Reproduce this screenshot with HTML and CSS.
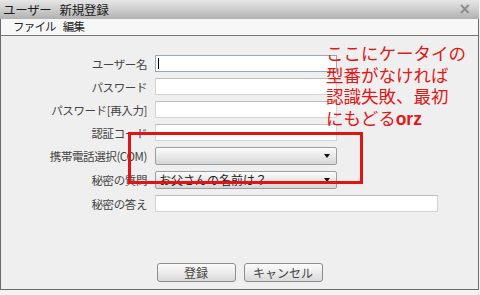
FILE: index.html
```html
<!DOCTYPE html>
<html lang="ja">
<head>
<meta charset="utf-8">
<link rel="stylesheet" href="styles.css">
</head>
<body>
<div class="window">
  <div class="titlebar">
    <span class="title"><span class="t1">ユーザー</span><span>新規登録</span></span>
    <span class="close">×</span>
  </div>
  <div class="menubar">
    <span class="menu-item">ファイル</span>
    <span class="menu-item">編集</span>
  </div>
  <div class="content">
    <div class="form">
      <label class="lbl">ユーザー名</label>
      <div class="input focused"><span class="caret"></span></div>
      <label class="lbl">パスワード</label>
      <div class="input"></div>
      <label class="lbl">パスワード[再入力]</label>
      <div class="input"></div>
      <label class="lbl">認証コード</label>
      <div class="input"></div>
      <label class="lbl">携帯電話選択(COM)</label>
      <div class="select"><span class="sel-text"></span><span class="arrow"></span></div>
      <label class="lbl">秘密の質問</label>
      <div class="select"><span class="sel-text">お父さんの名前は？</span><span class="arrow"></span></div>
      <label class="lbl">秘密の答え</label>
      <div class="input wide"></div>
    </div>
    <div class="buttons">
      <button class="btn">登録</button>
      <button class="btn">キャンセル</button>
    </div>
    <div class="highlight"></div>
    <div class="note">
      <div class="note-line">ここにケータイの</div>
      <div class="note-line">型番がなければ</div>
      <div class="note-line">認識失敗、最初</div>
      <div class="note-line">にもどる<b>orz</b></div>
    </div>
  </div>
</div>
</body>
</html>
```

FILE: styles.css
```css
html, body {
  margin: 0;
  padding: 0;
}
body {
  width: 480px;
  height: 295px;
  background: #f3f3f3;
  font-family: "Noto Sans CJK JP", "Noto Sans", sans-serif;
  font-size: 12px;
  color: #333;
  overflow: hidden;
}
.window {
  width: 479px;
  height: 290px;
  box-sizing: border-box;
  border: 1px solid #6a6a6a;
  border-top: none;
  display: flex;
  flex-direction: column;
}
.titlebar {
  height: 19px;
  margin: 0 -1px;
  background: linear-gradient(#e6e6e6, #cdcdcd 50%, #b0b0b0);
  display: flex;
  align-items: center;
  justify-content: space-between;
  padding: 0 8px 0 3px;
  flex-shrink: 0;
}
.title {
  font-size: 12.5px;
  line-height: 19px;
  color: #1a1a1a;
  letter-spacing: -0.3px;
}
.t1 {
  margin-right: 8px;
}
.close {
  font-size: 15px;
  font-weight: bold;
  color: #8a8a8a;
  line-height: 19px;
  font-family: "DejaVu Sans", sans-serif;
}
.menubar {
  height: 16px;
  background: #f7f7f7;
  border-bottom: 1px solid #777;
  display: flex;
  gap: 7px;
  padding-left: 12px;
  flex-shrink: 0;
}
.menu-item {
  font-size: 11.5px;
  line-height: 15px;
  color: #222;
  letter-spacing: -0.8px;
}
.content {
  flex: 1;
  position: relative;
  background: #efefef;
  display: flex;
  flex-direction: column;
  padding: 19px 0 7px 0;
}
.form {
  display: grid;
  grid-template-columns: 146px auto;
  column-gap: 8px;
  row-gap: 6px;
  justify-content: start;
  align-items: center;
}
.lbl {
  text-align: right;
  color: #444;
  font-size: 11.5px;
  line-height: 14px;
  letter-spacing: -0.4px;
  white-space: nowrap;
}
.input {
  width: 182px;
  height: 17px;
  box-sizing: border-box;
  background: #fff;
  border: 1px solid #d4d4d4;
  border-top-color: #bdbdbd;
  position: relative;
}
.input.focused {
  border-color: #9aa7b8;
}
.input.wide {
  width: 283px;
}
.caret {
  position: absolute;
  left: 2px;
  top: 2px;
  width: 1px;
  height: 11px;
  background: #000;
}
.select {
  width: 182px;
  height: 18px;
  box-sizing: border-box;
  border: 1px solid #9c9c9c;
  border-radius: 2px;
  background: linear-gradient(#fbfbfb, #e9e9e9 50%, #d6d6d6);
  display: flex;
  align-items: center;
  justify-content: space-between;
  padding: 0 6px 0 3px;
}
.sel-text {
  font-size: 12px;
  line-height: 14px;
  color: #222;
}
.arrow {
  width: 0;
  height: 0;
  border-left: 3px solid transparent;
  border-right: 3px solid transparent;
  border-top: 4px solid #111;
}
.buttons {
  margin-top: auto;
  display: flex;
  justify-content: center;
  gap: 8px;
}
.btn {
  width: 79px;
  height: 19px;
  box-sizing: border-box;
  border: 1px solid #8c8c8c;
  border-radius: 3px;
  background: linear-gradient(#fcfcfc, #ececec 50%, #d9d9d9);
  font-family: "Noto Sans CJK JP", sans-serif;
  font-size: 12px;
  line-height: 15px;
  color: #444;
  padding: 0;
}
.highlight {
  position: absolute;
  left: 127px;
  top: 96px;
  width: 235px;
  height: 52px;
  box-sizing: border-box;
  border: 3px solid #e01414;
}
.note {
  position: absolute;
  left: 325px;
  top: 6px;
  color: #e01818;
  white-space: nowrap;
}
.note-line {
  font-size: 17.5px;
  line-height: 21.5px;
  height: 21.5px;
}
.note b {
  font-family: "Liberation Sans", sans-serif;
  font-weight: bold;
}
```
